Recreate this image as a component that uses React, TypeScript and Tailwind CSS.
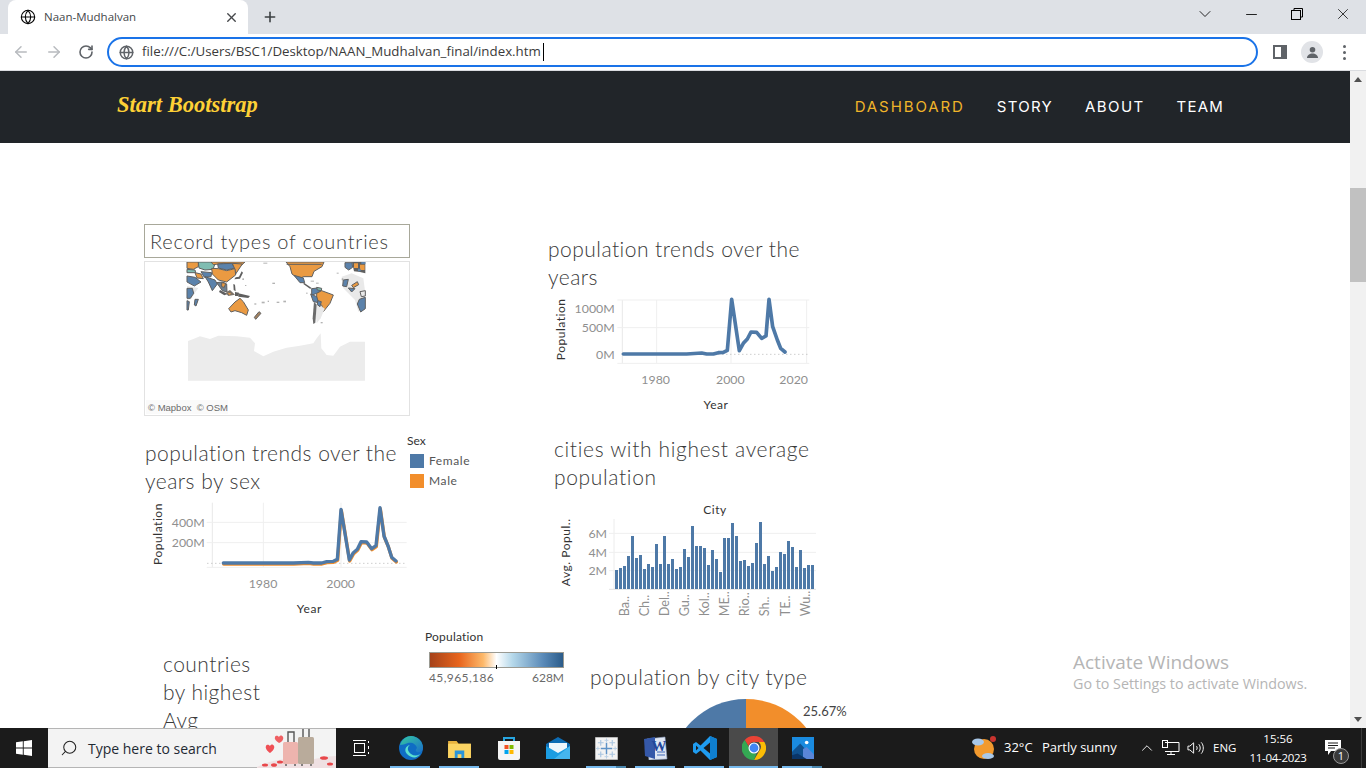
import React from "react";
import { ArrowLeft, ArrowRight, RotateCw, X, Plus, Globe, ChevronDown, ChevronUp, Minus, Search } from "lucide-react";

const chartFont = { fontFamily: "Lato, 'Liberation Sans', sans-serif" };
const Title = ({ children, className = "" }: { children: React.ReactNode; className?: string }) => (
  <div className={"font-['Lato',sans-serif] font-light text-[21px] leading-[28px] tracking-[0.47px] text-[#3a3a3a] " + className}>{children}</div>
);

function GridText({ x, y, t, anchor = "end" }: { x: number; y: number; t: string; anchor?: "start" | "middle" | "end" }) {
  return <text x={x} y={y} textAnchor={anchor} fontSize={37} fill="#8f8f8f" style={chartFont}>{t}</text>;
}
function AxisTitle({ x, y, t, rot }: { x: number; y: number; t: string; rot?: boolean }) {
  return (
    <text x={x} y={y} textAnchor="middle" fontSize={36} letterSpacing={1.6} fill="#333" style={chartFont} transform={rot ? `rotate(-90 ${x} ${y})` : undefined}>{t}</text>
  );
}

function TrendChart() {
  return (
    <svg viewBox="0 195 870 375" className="w-[290px] h-[125px] block">
      {[350, 573, 800].map((x) => <line key={x} x1={x} x2={x} y1={210} y2={400} stroke="#efefef" strokeWidth={3} />)}
      <line x1={247} x2={247} y1={210} y2={400} stroke="#e8e8e8" strokeWidth={3} />
      {[210, 293, 400].map((y) => <line key={y} x1={232} x2={808} y1={y} y2={y} stroke="#efefef" strokeWidth={3} />)}
      <line x1={247} x2={808} y1={373} y2={373} stroke="#b5b5b5" strokeWidth={3} strokeDasharray="3 9" />
      <polyline fill="none" stroke="#4e79a7" strokeWidth={11} strokeLinejoin="round" strokeLinecap="round" points="250,372 440,372 485,369 500,372 520,372 535,368 550,367 562,361 575,208 598,362 610,340 622,327 633,306 650,307 665,325 678,318 687,208 698,290 712,330 722,355 735,366" />
      <GridText x={224} y={250} t="1000M" />
      <GridText x={224} y={307} t="500M" />
      <GridText x={224} y={388} t="0M" />
      <GridText x={347} y={463} t="1980" anchor="middle" />
      <GridText x={571} y={463} t="2000" anchor="middle" />
      <GridText x={761} y={463} t="2020" anchor="middle" />
      <AxisTitle x={75} y={298} t="Population" rot />
      <AxisTitle x={528} y={536} t="Year" />
    </svg>
  );
}

function SexChart() {
  const pts = "250,399 460,399 505,397 520,399 545,399 560,395 580,394 592,388 603,238 628,390 640,368 652,358 663,335 680,336 695,356 708,347 720,233 732,318 745,350 755,382 768,393";
  return (
    <svg viewBox="0 210 1020 351" className="w-[340px] h-[117px] block">
      <line x1={217} x2={217} y1={218} y2={412} stroke="#e8e8e8" strokeWidth={3} />
      {[370, 603].map((x) => <line key={x} x1={x} x2={x} y1={218} y2={412} stroke="#efefef" strokeWidth={3} />)}
      {[277, 338, 412].map((y) => <line key={y} x1={200} x2={800} y1={y} y2={y} stroke="#efefef" strokeWidth={3} />)}
      <line x1={202} x2={800} y1={400} y2={400} stroke="#b5b5b5" strokeWidth={3} strokeDasharray="3 9" />
      <polyline fill="none" stroke="#f28e2b" strokeWidth={10} strokeLinejoin="round" strokeLinecap="round" points={pts} transform="translate(1 3)" />
      <polyline fill="none" stroke="#4e79a7" strokeWidth={10} strokeLinejoin="round" strokeLinecap="round" points={pts} />
      <GridText x={194} y={292} t="400M" />
      <GridText x={194} y={351} t="200M" />
      <GridText x={369} y={475} t="1980" anchor="middle" />
      <GridText x={602} y={475} t="2000" anchor="middle" />
      <AxisTitle x={65} y={312} t="Population" rot />
      <AxisTitle x={508} y={548} t="Year" />
    </svg>
  );
}

const tops = [225, 219, 213, 183, 123, 189, 180, 222, 207, 216, 147, 207, 123, 207, 192, 222, 216, 162, 186, 93, 153, 153, 159, 210, 165, 192, 231, 129, 129, 84, 123, 198, 195, 213, 204, 144, 81, 207, 183, 228, 216, 171, 177, 138, 156, 216, 165, 219, 210, 210];
const cityLabels = ["Ba..", "Ch..", "Del..", "Gu..", "Kol..", "ME..", "Rio..", "Sh..", "TE..", "Wu.."];

function CityChart() {
  return (
    <svg viewBox="0 0 855 390" className="w-[285px] h-[130px] block">
      <line x1={207} x2={207} y1={72} y2={282} stroke="#ececec" strokeWidth={3} />
      {[115, 172, 227].map((y) => <line key={y} x1={192} x2={813} y1={y} y2={y} stroke="#efefef" strokeWidth={3} />)}
      <line x1={192} x2={813} y1={283} y2={283} stroke="#e2e2e2" strokeWidth={3} />
      {tops.map((t, i) => <rect key={i} x={210 + i * 12} y={t} width={9} height={282 - t} fill="#4e79a7" />)}
      <GridText x={186} y={129} t="6M" />
      <GridText x={186} y={186} t="4M" />
      <GridText x={186} y={241} t="2M" />
      {cityLabels.map((l, i) => (
        <text key={l} x={252 + i * 60.2} y={364} fontSize={38} fill="#8f8f8f" style={chartFont} transform={`rotate(-90 ${252 + i * 60.2} 364)`}>{l}</text>
      ))}
      <AxisTitle x={510} y={58} t="City" />
      <AxisTitle x={76} y={172} t="Avg. Popul.." rot />
    </svg>
  );
}

function WorldMap() {
  const o = "#ea9a42", b = "#5b82ab", s = "#5f5f5f", g = "#e9e9e9";
  const c = { stroke: s, strokeWidth: 3, strokeLinejoin: "round" as const };
  const specksA = [[235, 8, 12, 3], [262, 68, 8, 4], [230, 125, 9, 5], [208, 130, 6, 4], [275, 125, 8, 4], [172, 55, 5, 5], [180, 75, 4, 3], [248, 122, 4, 4]];
  const specksB = [[170, 38, 6, 3], [185, 55, 5, 6], [10, 122, 8, 5], [78, 98, 5, 3], [122, 186, 6, 4], [92, 62, 10, 3], [108, 68, 8, 3]];
  return (
    <svg viewBox="145 262 264 153" className="w-[264px] h-[153px] block">
      <g transform="translate(185 260) scale(0.33333)">
        <path d="M6 6H40V20L25 28 6 25Z" fill={o} {...c} />
        <path d="M6 28 30 30 32 38 6 38Z" fill="#7fbdb2" {...c} />
        <path d="M40 6H92L84 28 60 30 42 24Z" fill="#7fbdb2" {...c} />
        <path d="M78 6H180L170 15 150 12 115 10 85 14Z" fill={o} {...c} />
        <path d="M98 12 140 10 150 24 125 30 100 24Z" fill={b} {...c} />
        <path d="M142 10 172 12 160 30 152 42 148 24Z" fill={o} {...c} />
        <path d="M80 25 100 26 125 32 150 26 152 45 125 66 100 60 82 42Z" fill={o} {...c} />
        <path d="M30 38 48 42 55 56 36 54Z" fill={o} {...c} />
        <path d="M48 35 80 38 78 50 58 52Z" fill={b} {...c} />
        <path d="M60 50 90 60 97 72 82 92 70 66Z" fill={b} {...c} />
        <path d="M6 48 30 52 48 66 28 78 6 66Z" fill={b} {...c} />
        <path d="M6 78 40 84 30 98 18 118 6 120Z" fill={g} />
        <path d="M6 85H22L26 100 16 115 6 115Z" fill={b} {...c} />
        <path d="M6 122 13 125 10 150 6 150Z" fill={b} {...c} />
        <path d="M30 118 40 118 33 138 28 135Z" fill={b} {...c} />
        <path d="M95 68 112 66 125 72 126 96 112 92Z" fill="#6f7f8f" {...c} />
        <path d="M110 68 122 70 118 82 110 80Z" fill={o} {...c} />
        <path d="M105 90 128 102 118 106 102 96Z" fill={s} />
        <path d="M128 94 135 90 150 104 130 108 122 100Z" fill="#7d7368" />
        <path d="M128 98 138 100 134 105Z" fill={o} />
        <path d="M150 96 162 98 160 108 150 108Z" fill={s} />
        <path d="M160 100 195 108 190 114 160 110Z" fill={s} />
        <path d="M145 72 150 74 152 94 146 90Z" fill={s} />
        <path d="M170 34 174 38 165 56 148 58 152 52 162 50Z" fill={s} />
        <path d="M131 146 150 126 165 115 175 125 190 150 185 166 170 158 150 152 138 156Z" fill={o} {...c} />
        <path d="M222 155 228 160 212 178 208 172Z" fill="#a5835f" {...c} />
        {specksA.map(([x, y, w, h], i) => <rect key={i} x={x} y={y} width={w} height={h} fill="#8a8a8a" opacity="0.65" />)}
      </g>
      <g transform="translate(280 260) scale(0.33333)">
        <path d="M18 6H132L126 20 102 34 96 50 72 50 55 56 36 42 30 20Z" fill={o} {...c} />
        <path d="M20 13H125" stroke={s} strokeWidth="3" />
        <path d="M42 46 70 54 74 68 60 68Z" fill={b} {...c} />
        <path d="M72 68 96 85 90 86 70 72Z" fill={s} />
        <path d="M95 86 112 84 124 92 110 100 95 106Z" fill={b} {...c} />
        <path d="M110 82 125 85 124 92 112 90Z" fill="#7fbdb2" {...c} />
        <path d="M110 100 125 92 160 105 150 130 130 155 125 135 110 125Z" fill={o} {...c} />
        <path d="M92 102 110 110 116 128 100 125Z" fill={b} {...c} />
        <path d="M112 130 134 146 122 175 110 190 107 160Z" fill={g} />
        <path d="M102 125 110 134 106 188 100 192 98 175Z" fill="#6b6b6b" />
        <path d="M113 122 124 125 120 140 112 134Z" fill={b} {...c} />
        <path d="M185 50 215 40 250 55 256 100 250 142 235 155 225 120 190 85Z" fill={g} />
        <path d="M215 76 232 65 236 74 220 83Z" fill={o} {...c} />
        <path d="M190 60 205 58 200 80 188 78Z" fill={b} {...c} />
        <path d="M205 84 225 86 215 96Z" fill={b} {...c} />
        <path d="M238 118 256 112V146L242 156 232 132Z" fill={b} {...c} />
        <path d="M240 95 256 92V108L244 110Z" fill={g} {...c} />
        <path d="M195 8H216L218 22 206 30 195 22Z" fill={b} {...c} />
        <path d="M216 6H256V40L240 36 222 34Z" fill={s} />
        <path d="M222 10H234V24H222ZM240 14H254V30H240Z" fill={o} />
        <path d="M234 26H242V34H234ZM244 6H256V12H244Z" fill={b} />
        {specksB.map(([x, y, w, h], i) => <rect key={i} x={x} y={y} width={w} height={h} fill="#8a8a8a" opacity="0.65" />)}
      </g>
      <g transform="translate(130 215) scale(0.33333)">
        <path d="M174 378L190 372 210 364 240 372 265 362 320 364 360 368 375 385 372 408 400 424 430 410 470 398 510 392 550 385 560 370 572 355 574 400 590 420 610 422 630 395 660 380 705 380V497H174Z" fill="#ececec" />
      </g>
      <rect x={146} y={400} width={82} height={14} fill="#fafafa" />
      <text x={148} y={411} fontSize={9.500} fill="#6a6a6a" style={{ fontFamily: "'Liberation Sans', sans-serif" }} xmlSpace="preserve">© Mapbox  © OSM</text>
    </svg>
  );
}

const WinCtl = ({ children }: { children: React.ReactNode }) => <div className="w-[46px] h-[28px] flex items-center justify-center">{children}</div>;

function EdgeIcon() {
  return (
    <svg viewBox="0 0 24 24" className="w-[24px] h-[24px]">
      <defs><linearGradient id="eg" x1="0" y1="0" x2="1" y2="1"><stop offset="0" stopColor="#36c9a0" /><stop offset="1" stopColor="#1a6fc9" /></linearGradient></defs>
      <circle cx="12" cy="12" r="12" fill="#0f6dc4" />
      <path d="M1 9C3 3 8 0 12 0c6 0 12 5 12 12 0 3-3 5-6 4-2-1-1-3 0-4-1-4-5-6-9-5-3 1-6 2-8 2Z" fill="url(#eg)" />
      <path d="M8 18c-3-3-2-8 3-9-3 2-3 6 1 9 3 2 6 2 9 0-3 5-9 4-13 0Z" fill="#5be0d0" />
    </svg>
  );
}
function FolderIcon() {
  return (
    <svg viewBox="0 0 24 20" className="w-[23px] h-[19px]">
      <path d="M0 2h9l2 3h13v15H0Z" fill="#e8b33f" />
      <path d="M0 5h24v15H0Z" fill="#fbd463" />
      <path d="M7 12h10v8h-3v-4h-4v4H7Z" fill="#2a94d8" />
    </svg>
  );
}
function StoreIcon() {
  return (
    <svg viewBox="0 0 24 24" className="w-[24px] h-[24px]">
      <path d="M7 5V2h10v3" fill="none" stroke="#27a5e0" strokeWidth="2" />
      <path d="M1 5h22v17a2 2 0 0 1-2 2H3a2 2 0 0 1-2-2Z" fill="#f5f5f5" />
      <rect x="7.500" y="9" width="4" height="4" fill="#f25022" />
      <rect x="12.500" y="9" width="4" height="4" fill="#7fba00" />
      <rect x="7.500" y="14" width="4" height="4" fill="#00a4ef" />
      <rect x="12.500" y="14" width="4" height="4" fill="#ffb900" />
    </svg>
  );
}
function MailIcon() {
  return (
    <svg viewBox="0 0 24 22" className="w-[24px] h-[22px]">
      <path d="M0 7 12 0l12 7v15H0Z" fill="#0d6cb4" />
      <path d="M3 6h18v6l-9 5-9-5Z" fill="#eef6fc" />
      <path d="M0 9l12 7 12-7v13H0Z" fill="#1c9de2" />
      <path d="M24 9v13H8Z" fill="#45b5ee" />
    </svg>
  );
}
function TableauIcon() {
  const b = "#5f93c7";
  return (
    <svg viewBox="0 0 24 24" className="w-[23px] h-[23px]">
      <rect width="24" height="24" fill="#f3f3f3" stroke="#777" strokeWidth="1" />
      <path d="M12 6v12M6 12h12" stroke={b} strokeWidth="1.500" />
      {[[6, 6], [18, 6], [6, 18], [18, 18]].map(([x, y]) => <path key={`${x}${y}`} d={`M${x} ${y - 3}v6M${x - 3} ${y}h6`} stroke="#a9c5e0" strokeWidth="1.200" />)}
      {[[12, 3.5], [12, 20.5], [3, 12], [21, 12]].map(([x, y]) => <path key={`${x}${y}`} d={`M${x} ${y - 2}v4M${x - 2} ${y}h4`} stroke="#b8cfe5" strokeWidth="1" />)}
    </svg>
  );
}
function WordIcon() {
  return (
    <div className="relative w-[24px] h-[24px]">
      <svg viewBox="0 0 24 24" className="w-[24px] h-[24px] absolute inset-0">
        <path d="M3 3 21 1l2 22-18 1Z" fill="#dfe6f3" stroke="#8fa0bf" strokeWidth=".6" />
        <path d="M0 3 11 1v22L1 20Z" fill="#3558a8" />
        <path d="M13 16h8M13 19h8" stroke="#3f66b5" strokeWidth="1.200" />
      </svg>
      <span className="absolute left-[8px] top-[1px] text-[#24479a] text-[15px] leading-[18px] font-bold font-['Liberation_Serif',serif]">W</span>
    </div>
  );
}
function VsIcon() {
  return (
    <svg viewBox="0 0 24 24" className="w-[24px] h-[24px]">
      <path d="M17 0 7.500 9.500 3 6 0 8v8l3 2 4.500-3.500L17 24l7-3V3Z" fill="#1f9cf0" />
      <path d="M17 0 24 3v18l-7 3Z" fill="#0f7fcf" />
      <path d="M17 6.500 10.500 12l6.500 5.500Z" fill="#1b1b1b" />
      <path d="M3 9.500 5.500 12 3 14.500Z" fill="#1b1b1b" />
    </svg>
  );
}
function ChromeIcon() {
  return (
    <svg viewBox="0 0 48 48" className="w-[24px] h-[24px]">
      <path d="M24 0a24 24 0 0 1 20.800 12H24a12 12 0 0 0-11.300 8L5.500 8A24 24 0 0 1 24 0Z" fill="#ea4335" />
      <path d="M44.800 12A24 24 0 0 1 24 48l10.400-18a12 12 0 0 0-1-18Z" fill="#fbbc05" />
      <path d="M24 48A24 24 0 0 1 5.500 8l10.400 18a12 12 0 0 0 13.500 8.700Z" fill="#34a853" />
      <circle cx="24" cy="24" r="11" fill="#fff" />
      <circle cx="24" cy="24" r="8.800" fill="#4285f4" />
    </svg>
  );
}
function PhotosIcon() {
  return (
    <svg viewBox="0 0 24 24" className="w-[22px] h-[22px]">
      <rect width="24" height="24" fill="#1a8be0" />
      <circle cx="16" cy="6" r="2" fill="#fff" />
      <path d="M0 16 9 7l8 9v8H0Z" fill="#10518f" />
      <path d="M12 13l4-2 8 8v5H12Z" fill="#5a86d8" />
      <path d="M0 20l6-2 10 6H0Z" fill="#0a3568" />
    </svg>
  );
}
function TaskView() {
  return (
    <svg viewBox="0 0 18 16" className="w-[18px] h-[16px]" fill="none" stroke="#fff" strokeWidth="1">
      <rect x="1.500" y="3.500" width="10" height="9" />
      <path d="M0 .5h13M0 15.500h13M15.500 1v2M15.500 6v3M15.500 12v2" />
    </svg>
  );
}
function Luggage() {
  return (
    <svg viewBox="0 0 79 39" className="w-[79px] h-[39px] block">
      <path d="M0 38C15 30 30 29 50 31 60 30 70 27 79 27V39H0Z" fill="#efe0e2" />
      <path d="M13 24c-3-2-5-5-4-7 1-2 3-1 4 0 1-2 3-2 4 0 1 2-1 5-4 7Z" fill="#ef4f55" />
      <path d="M22 14c-3-2-5-4-4-6 1-2 3-1 4 0 1-2 3-2 4 0 1 2-1 5-4 6Z" fill="#ef5f62" />
      <path d="M31 13V3h6v10" fill="none" stroke="#555" strokeWidth="1.400" />
      <rect x="26" y="13" width="15" height="22" rx="1.500" fill="#eeb4ae" />
      <path d="M46 8V-1h6v9" fill="none" stroke="#555" strokeWidth="1.400" />
      <rect x="41" y="8" width="16" height="27" rx="1.500" fill="#b9ab9b" />
      <path d="M29 35v2M38 35v2M45 35v2M54 35v2" stroke="#555" strokeWidth="1.400" />
      <ellipse cx="8" cy="36" rx="3" ry="1.500" fill="#e8474a" />
      <ellipse cx="17" cy="36" rx="3" ry="1.800" fill="#e8474a" />
      <ellipse cx="23" cy="33" rx="3" ry="1.500" fill="#e8474a" />
      <ellipse cx="67" cy="29" rx="4" ry="1.800" fill="#e8474a" />
      <ellipse cx="73" cy="35" rx="3" ry="1.500" fill="#e8474a" />
    </svg>
  );
}
function Weather() {
  return (
    <svg viewBox="0 0 26 26" className="w-[26px] h-[26px]">
      <circle cx="12" cy="14" r="10" fill="#f29a2e" />
      <circle cx="21" cy="4" r="3" fill="#c9342f" />
      <ellipse cx="6" cy="7" rx="6" ry="3.500" fill="#a9c8e8" />
      <ellipse cx="16" cy="21" rx="6" ry="3" fill="#a9c8e8" />
    </svg>
  );
}

const apps: { el: React.ReactNode; u?: boolean; dim?: boolean; active?: boolean }[] = [
  { el: <TaskView /> },
  { el: <EdgeIcon />, u: true },
  { el: <FolderIcon />, u: true },
  { el: <StoreIcon /> },
  { el: <MailIcon /> },
  { el: <TableauIcon />, u: true, dim: true },
  { el: <WordIcon />, u: true },
  { el: <VsIcon />, u: true },
  { el: <ChromeIcon />, u: true, active: true },
  { el: <PhotosIcon />, u: true, dim: true },
];

export default function App() {
  return (
    <div className="h-screen w-[1366px] flex flex-col overflow-hidden bg-white font-['Open_Sans',sans-serif]">
      {/* tab strip */}
      <div className="h-[34px] shrink-0 bg-[#dee1e6] flex items-end pl-[8px]">
        <div className="w-[240px] h-[34px] bg-white rounded-t-[8px] flex items-center pl-[12px] pr-[9px] text-[#45474a]">
          <Globe size={16} strokeWidth={1.6} className="text-black" />
          <span className="ml-[8px] text-[11.500px] flex-1">Naan-Mudhalvan</span>
          <X size={15} strokeWidth={2.2} />
        </div>
        <div className="ml-[14px] mb-[9px]"><Plus size={16} strokeWidth={2.4} className="text-[#3c4043]" /></div>
        <div className="flex-1" />
        <div className="flex h-[28px] self-start">
          <WinCtl><ChevronDown size={20} strokeWidth={1} className="text-black" /></WinCtl>
          <WinCtl><Minus size={17} strokeWidth={1.2} className="text-black" /></WinCtl>
          <WinCtl>
            <svg viewBox="0 0 12 12" className="w-[12px] h-[12px]" fill="none" stroke="#000"><rect x=".5" y="2.500" width="9" height="9" /><path d="M3 2.500V.5h8.500V9h-2" /></svg>
          </WinCtl>
          <WinCtl><X size={18} strokeWidth={1} className="text-black" /></WinCtl>
        </div>
      </div>
      {/* toolbar */}
      <div className="h-[37px] shrink-0 bg-white border-b border-[#dadce0] flex items-center text-[#b8bbbf]">
        <ArrowLeft size={18} className="ml-[12px]" />
        <ArrowRight size={18} className="ml-[15px]" />
        <RotateCw size={16} strokeWidth={2.4} className="ml-[15px] text-[#5f6368]" />
        <div className="ml-[13px] w-[1151px] h-[30px] rounded-full border-2 border-[#1a73e8] flex items-center pl-[10px]">
          <Globe size={15} className="text-[#5f6368]" strokeWidth={2.4} />
          <span className="ml-[8px] text-[13.300px] text-[#3b3b3b] font-['Open_Sans',sans-serif]">file:///C:/Users/BSC1/Desktop/NAAN_Mudhalvan_final/index.htm</span>
          <span className="ml-[2px] w-px h-[18px] bg-black" />
        </div>
        <div className="ml-[15px] w-[14px] h-[14px] border-[2px] border-[#5f6368] border-r-[6px]" />
        <div className="ml-[14px] w-[22px] h-[22px] rounded-full bg-[#e1e3e7] flex items-center justify-center">
          <svg viewBox="0 0 14 14" className="w-[13px] h-[13px]" fill="#5f6368"><circle cx="7" cy="4" r="3" /><path d="M1 13c0-3 3-5 6-5s6 2 6 5Z" /></svg>
        </div>
        <div className="ml-[20px] flex flex-col gap-[3px]">
          {[0, 1, 2].map((i) => <span key={i} className="w-[3px] h-[3px] rounded-full bg-[#5f6368]" />)}
        </div>
      </div>
      {/* page */}
      <div className="flex-1 min-h-0 flex relative">
        <div className="flex-1 min-w-0 overflow-hidden">
          <div className="h-[72px] bg-[#212529] flex items-center pl-[117px]">
            <span className="text-[#fed136] text-[22.500px] italic font-bold font-['Liberation_Serif',serif] -mt-[4px]">Start Bootstrap</span>
            <div className="flex-1" />
            <nav className="flex gap-[32px] pr-[126px] text-[15px] font-normal font-['Inter',sans-serif] text-white">
              <span className="text-[#f0b429] tracking-[1.9px]">DASHBOARD</span>
              <span className="tracking-[1.3px]">STORY</span>
              <span className="tracking-[1.4px]">ABOUT</span>
              <span className="tracking-[1.2px]">TEAM</span>
            </nav>
          </div>
          <div className="flex pl-[144px]">
            {/* left column */}
            <div className="w-[404px] shrink-0 pt-[81px]">
              <div className="w-[266px] h-[34px] border border-[#a8a89a] flex items-center pl-[5px] font-['Lato',sans-serif] font-light text-[20px] tracking-[0.75px] text-[#3a3a3a]">Record types of countries</div>
              <div className="w-[266px] h-[155px] mt-[3px] border border-[#e2e2e2]"><WorldMap /></div>
              <div className="flex mt-[18px] items-start">
                <Title className="mt-[5px] ml-px w-[262px] shrink-0">population trends over the years by sex</Title>
                <div className="text-[12px] text-[#333] font-['Lato',sans-serif]">
                  <div className="leading-[14px]">Sex</div>
                  <div className="h-[14px] flex items-center gap-[5px] ml-[3px] mt-[6px] text-[#555] tracking-[0.6px]"><span className="w-[14px] h-[14px] bg-[#4e79a7]" />Female</div>
                  <div className="h-[14px] flex items-center gap-[5px] ml-[3px] mt-[6px] text-[#555] tracking-[0.6px]"><span className="w-[14px] h-[14px] bg-[#f28e2b]" />Male</div>
                </div>
              </div>
              <div className="-ml-[4px] mt-[5px]"><SexChart /></div>
              <div className="flex items-start">
                <Title className="ml-[19px] mt-[33px] w-[262px] shrink-0">countries<br />by highest<br />Avg</Title>
                <div className="mt-[13px] shrink-0 font-['Lato',sans-serif]">
                  <div className="text-[12px] leading-[14px] text-[#333] tracking-[0.2px]">Population</div>
                  <div className="relative ml-[4px] mt-[8px] w-[135px] h-[16px] border border-[#9a9a92] bg-[linear-gradient(to_right,#a5421a,#e8651d_22%,#fdb96a_40%,#ffffff_50%,#b5d8ea_62%,#5a8ab8_85%,#2b5c8a)]">
                    <span className="absolute left-[66px] bottom-[-2px] w-px h-[4px] bg-black" />
                  </div>
                  <div className="ml-[4px] mt-[1px] w-[135px] flex justify-between text-[12px] text-[#6a6a6a]"><span className="tracking-[0.4px]">45,965,186</span><span>628M</span></div>
                </div>
              </div>
            </div>
            {/* right column */}
            <div className="w-[300px] shrink-0 pt-[92px]">
              <Title className="w-[270px]">population trends over the years</Title>
              <div className="-ml-[8px] mt-[4px]"><TrendChart /></div>
              <Title className="ml-[6px] mt-[15px] w-[270px] tracking-[0.65px]">cities with highest average population</Title>
              <div className="-ml-[3px] mt-[4px]"><CityChart /></div>
              <Title className="ml-[42px] mt-[38px] whitespace-nowrap tracking-[0.3px]">population by city type</Title>
              <svg viewBox="0 0 300 70" className="w-[300px] h-[70px] block mt-[8px]">
                <path d="M198 0A77 77 0 0 0 121 77H198Z" fill="#4e79a7" />
                <path d="M198 0A77 77 0 0 1 275 77H198Z" fill="#f28e2b" />
                <text x="255" y="17" fontSize="13" fill="#444" style={chartFont}>25.67%</text>
              </svg>
            </div>
          </div>
        </div>
        {/* scrollbar */}
        <div className="w-[16px] shrink-0 bg-[#f1f1f1] flex flex-col items-center">
          <div className="h-[17px] flex items-center"><span className="border-x-[4px] border-x-transparent border-b-[5px] border-b-[#505050]" /></div>
          <div className="mt-[100px] w-full h-[94px] bg-[#c1c1c1]" />
          <div className="flex-1" />
          <div className="h-[17px] flex items-center"><span className="border-x-[4px] border-x-transparent border-t-[5px] border-t-[#505050]" /></div>
        </div>
        {/* activation watermark */}
        <div className="absolute left-[1073px] top-[578px] text-[#b5b5b5] font-['Open_Sans',sans-serif] pointer-events-none whitespace-nowrap">
          <div className="text-[19px] leading-[26px]">Activate Windows</div>
          <div className="text-[14.300px] leading-[20px] -mt-[1px]">Go to Settings to activate Windows.</div>
        </div>
      </div>
      {/* taskbar */}
      <div className="h-[40px] shrink-0 bg-[#1b1b1b] flex items-stretch text-white font-['Open_Sans',sans-serif]">
        <div className="w-[48px] flex items-center justify-center">
          <svg viewBox="0 0 16 16" className="w-[16px] h-[16px]" fill="#fff"><path d="M0 2.300 6.800 1.300V7.600H0ZM7.700 1.200 16 0V7.600H7.700ZM0 8.400H6.800V14.700L0 13.700ZM7.700 8.400H16V16L7.700 14.800Z" /></svg>
        </div>
        <div className="w-[288px] bg-[#f3f3f3] border-y border-[#b5b5b5] flex items-center pl-[12px] text-[#1f2a33] relative">
          <Search size={18} strokeWidth={1.4} className="scale-x-[-1] text-[#222]" />
          <span className="ml-[10px] text-[14px]">Type here to search</span>
          <div className="absolute right-0 top-0"><Luggage /></div>
        </div>
        <div className="flex ml-[1px]">
          {apps.map((a, i) => (
            <div key={i} className={"relative w-[49px] flex items-center justify-center " + (a.active ? "bg-[#4a4a4a]" : "")}>
              {a.el}
              {a.u && (
                <span className={"absolute bottom-0 h-[2px] bg-[#76b9ed] " + (a.active ? "inset-x-0" : "left-[4px] w-[40px]")}>
                  {a.dim && <span className="absolute right-0 top-0 h-[2px] w-[10px] bg-[#4a86ad]" />}
                </span>
              )}
            </div>
          ))}
        </div>
        <div className="flex items-center ml-[145px] text-[13px] whitespace-nowrap">
          <Weather />
          <span className="ml-[6px] w-[29px]">32°C</span>
          <span className="ml-[9px] w-[75px]">Partly sunny</span>
          <ChevronUp size={18} strokeWidth={1.2} className="ml-[21px]" />
          <svg viewBox="0 0 18 16" className="w-[18px] h-[16px] ml-[6px]" fill="none" stroke="#fff"><path d="M3 2.500h14v9H3M9 11.500v3M5 14.500h8" /><rect x=".5" y=".5" width="5" height="7" /></svg>
          <svg viewBox="0 0 18 16" className="w-[17px] h-[16px] ml-[7px]" fill="none" stroke="#fff"><path d="M1 6h2l4-3.500v11L3 10H1ZM10 6c1 1 1 3 0 4M12.500 4c2 2 2 6 0 8M15 2c3 3 3 9 0 12" /></svg>
          <span className="ml-[9px] w-[23px] text-[11.500px]">ENG</span>
          <div className="ml-[13px] w-[58px] text-[11.500px] leading-[19px] text-center flex flex-col items-center"><span>15:56</span><span className="tracking-[-0.3px]">11-04-2023</span></div>
          <div className="relative ml-[18px] w-[24px] h-[24px]">
            <svg viewBox="0 0 16 16" className="w-[16px] h-[16px] absolute left-0 top-[4px]" fill="#fff"><path d="M0 0h16v11H6l-3 4v-4H0Z" /><path d="M3 3h10M3 5.500h10M3 8h7" stroke="#1b1b1b" /></svg>
            <span className="absolute left-[8px] top-[12px] w-[16px] h-[16px] rounded-full bg-[#3a3a3a] border border-[#999] text-[11px] leading-[14px] text-center">1</span>
          </div>
          <span className="ml-[12px] w-px h-[40px] bg-[#3c3c3c]" />
        </div>
      </div>
    </div>
  );
}
